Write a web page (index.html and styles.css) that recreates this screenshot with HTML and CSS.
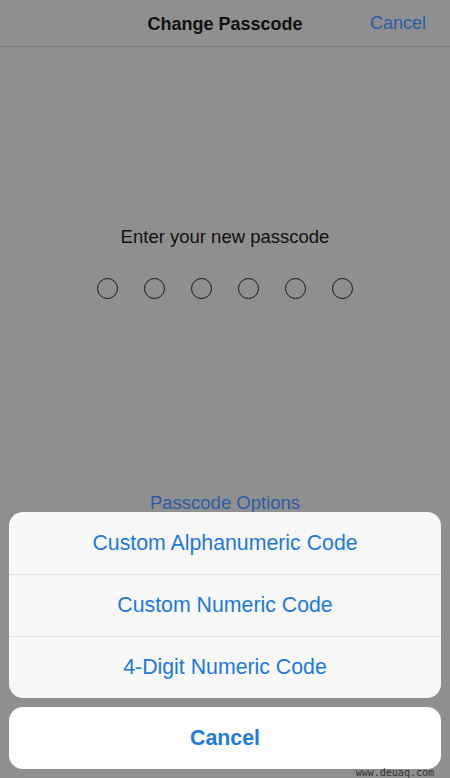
FILE: index.html
```html
<!DOCTYPE html>
<html>
<head>
<meta charset="utf-8">
<link rel="stylesheet" href="styles.css">
</head>
<body>
<div class="screen">
  <header class="nav">
    <div class="nav-title">Change Passcode</div>
    <div class="nav-cancel">Cancel</div>
  </header>
  <main class="content">
    <div class="prompt">Enter your new passcode</div>
    <div class="dots">
      <span class="dot"></span><span class="dot"></span><span class="dot"></span>
      <span class="dot"></span><span class="dot"></span><span class="dot"></span>
    </div>
    <div class="options-link">Passcode Options</div>
  </main>
  <div class="sheet">
    <div class="group">
      <div class="action">Custom Alphanumeric Code</div>
      <div class="action">Custom Numeric Code</div>
      <div class="action">4-Digit Numeric Code</div>
    </div>
    <div class="group cancel-group">
      <div class="action cancel">Cancel</div>
    </div>
  </div>
  <div class="watermark">www.deuaq.com</div>
</div>
</body>
</html>
```

FILE: styles.css
```css
html, body {
  margin: 0;
  padding: 0;
}
body {
  background: #8f8f8f;
  font-family: "Liberation Sans", Arial, sans-serif;
}
.screen {
  position: relative;
  width: 450px;
  height: 778px;
  overflow: hidden;
  background: #8f8f8f;
}
.nav {
  position: relative;
  height: 46px;
  border-bottom: 1px solid #7b7b7b;
  display: flex;
  align-items: center;
  justify-content: center;
}
.nav-title {
  font-size: 18px;
  font-weight: bold;
  color: #111;
  margin-top: 2px;
}
.nav-cancel {
  position: absolute;
  right: 24px;
  top: 13px;
  font-size: 18px;
  color: #2b5ca6;
}
.content {
  display: flex;
  flex-direction: column;
  align-items: center;
}
.prompt {
  margin-top: 179px;
  font-size: 18.5px;
  color: #111;
}
.dots {
  margin-top: 30px;
  display: flex;
  gap: 26px;
}
.dot {
  width: 19px;
  height: 19px;
  border: 1.5px solid #161616;
  border-radius: 50%;
}
.options-link {
  margin-top: 193px;
  font-size: 18.5px;
  color: #2b5ca6;
}
.sheet {
  position: absolute;
  left: 9px;
  right: 9px;
  top: 512px;
  display: flex;
  flex-direction: column;
  gap: 9px;
}
.group {
  background: #f8f8f8;
  border-radius: 14px;
  overflow: hidden;
}
.action {
  height: 62px;
  display: flex;
  align-items: center;
  justify-content: center;
  font-size: 21.3px;
  color: #1c79df;
  border-top: 1px solid #e2e2e2;
  box-sizing: border-box;
}
.action:first-child {
  border-top: none;
}
.cancel-group {
  background: #ffffff;
}
.cancel {
  font-weight: bold;
}
.watermark {
  position: absolute;
  right: 16px;
  top: 767px;
  font-size: 10px;
  line-height: 11px;
  color: #333;
  font-family: "DejaVu Sans Mono", monospace;
}
```
